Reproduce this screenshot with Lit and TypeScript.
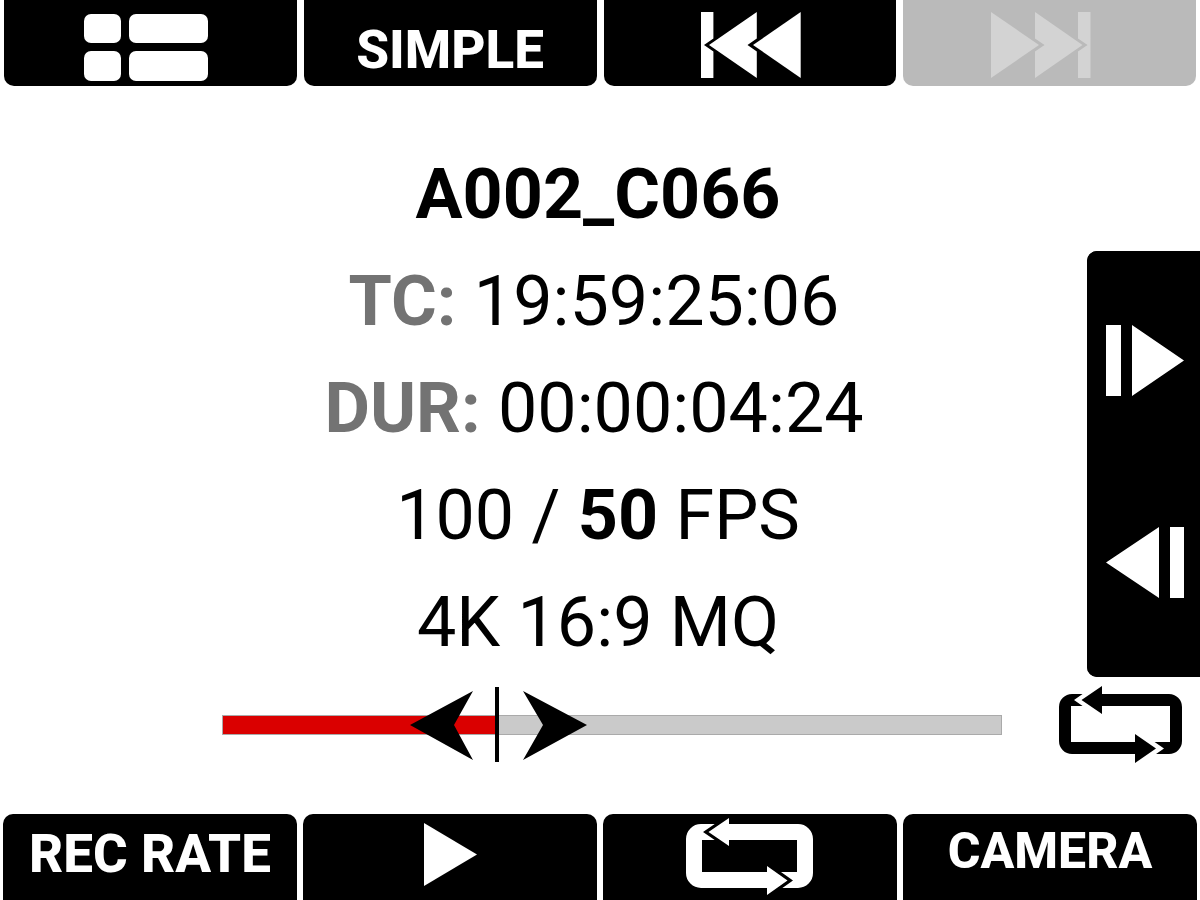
import { LitElement, html, svg, css } from "lit";
import { customElement, state } from "lit/decorators.js";

const listIcon = svg`
  <svg class="icon" viewBox="4 0 292 86" aria-hidden="true">
    <rect x="84" y="14" width="37" height="29" rx="7" />
    <rect x="129" y="14" width="79" height="29" rx="7" />
    <rect x="84" y="51" width="37" height="30" rx="7" />
    <rect x="129" y="51" width="79" height="30" rx="7" />
  </svg>`;

const previousIcon = svg`
  <svg class="icon" viewBox="604 0 292 86" aria-hidden="true">
    <path d="M701 12H713.4V38.5L704 45L713.4 51.5V78H701Z" />
    <path d="M709 45L756.8 12V38.5L747.5 45L756.8 51.5V78Z" />
    <path d="M753 45L800.7 12V78Z" />
  </svg>`;

const nextIcon = svg`
  <svg class="icon" viewBox="904 0 292 86" aria-hidden="true">
    <path d="M991 12L1039 45L991 78Z" />
    <path d="M1035 12L1082.5 45L1035 78V51.5L1044.5 45L1035 38.5Z" />
    <path d="M1090.5 12H1078V38.5L1087.5 45L1078 51.5V78H1090.5Z" />
  </svg>`;

const playIcon = svg`
  <svg class="icon" viewBox="303 814 294 86" aria-hidden="true">
    <path d="M424 823L477 854.5L424 886Z" />
  </svg>`;

const loopIcon = svg`
  <svg class="icon" viewBox="603 814 294 86" aria-hidden="true">
    <path fill-rule="evenodd" d="M701 824H798A15 15 0 0 1 813 839V873A15 15 0 0 1 798 888H701A15 15 0 0 1 686 873V839A15 15 0 0 1 701 824ZM702 840V872H797V840Z" />
    <path class="cut" d="M703 832L723.5 818V846ZM793 880.5L772.500 866V895Z" />
    <path d="M708.500 832L729 818V846ZM787.500 880.5L767 866V895Z" />
  </svg>`;

const loopStatusIcon = svg`
  <svg class="loop-art" viewBox="1058 686 124 77" aria-hidden="true">
    <path fill-rule="evenodd" d="M1072 694H1169A13 13 0 0 1 1182 707V741A13 13 0 0 1 1169 754H1072A13 13 0 0 1 1059 741V707A13 13 0 0 1 1072 694ZM1071 706V742H1170V706Z" />
    <path class="gap" d="M1074 700L1094 686V714ZM1164 748.500L1143 734V763Z" />
    <path d="M1081.500 700L1102 686V714ZM1156 748.500L1135 734V763Z" />
  </svg>`;

const frameForwardIcon = svg`
  <svg class="step-art" viewBox="0 0 78 72" aria-hidden="true">
    <path d="M0 0H15V71H0ZM26 0L78 35.500L26 71Z" />
  </svg>`;

const frameBackIcon = svg`
  <svg class="step-art" viewBox="0 0 78 72" aria-hidden="true">
    <path d="M64 0H78V71H64ZM53 0V71L0 35.500Z" />
  </svg>`;

@customElement("app-root")
export class AppRoot extends LitElement {
  static styles = css`
    :host {
      display: flex;
      flex-direction: column;
      min-height: 100vh;
      background: #fff;
      color: #000;
      font-family: Roboto, "Liberation Sans", sans-serif;
    }
    button {
      border: 0;
      margin: 0;
      padding: 0;
      font: inherit;
      color: #fff;
      background: #000;
      cursor: pointer;
    }
    .bar {
      display: grid;
      grid-template-columns: repeat(4, minmax(0, 1fr));
    }
    .top {
      gap: 7px;
      padding: 0 4px;
    }
    .bottom {
      gap: 6px;
      padding: 0 3px;
    }
    .key {
      display: flex;
      align-items: center;
      justify-content: center;
      height: 86px;
      overflow: hidden;
      font-size: 53px;
      line-height: 60px;
      font-weight: 800;
      white-space: nowrap;
    }
    .top .key {
      border-radius: 0 0 10px 10px;
    }
    .bottom .key {
      border-radius: 10px 10px 0 0;
    }
    .top .label {
      padding-top: 14px;
    }
    .bottom .label {
      padding-bottom: 6px;
    }
    .bottom .small {
      font-size: 50px;
      padding-bottom: 12px;
    }
    .key:disabled {
      background: #bababa;
      color: #d3d3d3;
      cursor: default;
    }
    .icon {
      display: block;
      flex: none;
      height: 86px;
      fill: currentColor;
    }
    .cut {
      fill: #000;
    }
    main {
      flex: 1;
      display: flex;
      flex-direction: column;
      justify-content: flex-end;
      padding-bottom: 51px;
    }
    .clip {
      display: grid;
      grid-template-columns: 113px minmax(0, 1fr) 113px;
      align-items: end;
    }
    .info {
      grid-column: 2;
      padding: 0 4px 1px 0;
      text-align: center;
      font-size: 70px;
      line-height: 107px;
    }
    .info h1,
    .info p {
      margin: 0;
      font-size: inherit;
    }
    .info .timed {
      padding-right: 8px;
    }
    .name {
      font-weight: 700;
    }
    .tag {
      font-weight: 700;
      color: #737373;
    }
    .steps {
      display: grid;
      grid-template-rows: 1fr 1fr;
      height: 426px;
      background: #000;
      border-radius: 10px 0 0 10px;
      overflow: hidden;
    }
    .step {
      display: flex;
      justify-content: center;
      padding-left: 3px;
    }
    .forward {
      align-items: flex-start;
      padding-top: 74px;
    }
    .back {
      align-items: flex-end;
      padding-bottom: 78px;
    }
    .step-art {
      display: block;
      width: 78px;
      height: 72px;
      fill: currentColor;
    }
    .transport {
      display: flex;
      align-items: center;
      gap: 56px;
      padding: 9px 18px 0 222px;
    }
    .scrub {
      position: relative;
      flex: 1;
      display: flex;
      align-items: center;
      height: 77px;
    }
    .track {
      flex: 1;
      box-sizing: border-box;
      height: 20px;
      border: 1px solid #aaa;
      background: #cacaca;
    }
    .played {
      height: 100%;
      background: #da0000;
    }
    .handle {
      position: absolute;
      top: 0;
      width: 180px;
      height: 77px;
      transform: translateX(-50%);
      pointer-events: none;
    }
    .scrub input {
      position: absolute;
      inset: 0;
      width: 100%;
      height: 100%;
      margin: 0;
      opacity: 0;
      cursor: pointer;
    }
    .loop {
      background: none;
      color: #000;
    }
    .loop-art {
      display: block;
      width: 124px;
      height: 77px;
      fill: currentColor;
    }
    .gap {
      fill: #fff;
    }
  `;

  @state() private position = 353;

  private onScrub(e: Event) {
    this.position = Number((e.target as HTMLInputElement).value);
  }

  render() {
    const percent = `${this.position / 10}%`;
    return html`
      <nav class="bar top" aria-label="Clip navigation">
        <button class="key" aria-label="Clip list">${listIcon}</button>
        <button class="key"><span class="label">SIMPLE</span></button>
        <button class="key" aria-label="Previous clip">${previousIcon}</button>
        <button class="key" aria-label="Next clip" disabled>${nextIcon}</button>
      </nav>
      <main>
        <section class="clip">
          <div class="info">
            <h1 class="name">A002_C066</h1>
            <p class="timed"><span class="tag">TC:</span> 19:59:25:06</p>
            <p class="timed"><span class="tag">DUR:</span> 00:00:04:24</p>
            <p>100 / <strong>50</strong> FPS</p>
            <p>4K 16:9 MQ</p>
          </div>
          <div class="steps">
            <button class="step forward" aria-label="Step forward">${frameForwardIcon}</button>
            <button class="step back" aria-label="Step back">${frameBackIcon}</button>
          </div>
        </section>
        <section class="transport">
          <div class="scrub">
            <div class="track"><div class="played" style="width:${percent}"></div></div>
            <svg class="handle" style="left:${percent}" viewBox="0 0 180 77" aria-hidden="true">
              <path d="M88 1H92V76H88ZM3 39L66 5L47 39L66 74ZM180 39L116 5L136 39L116 74Z" />
            </svg>
            <input type="range" min="0" max="1000" aria-label="Playback position"
              .value=${String(this.position)} @input=${this.onScrub} />
          </div>
          <button class="loop" aria-label="Loop mode">${loopStatusIcon}</button>
        </section>
      </main>
      <nav class="bar bottom" aria-label="Playback controls">
        <button class="key"><span class="label">REC RATE</span></button>
        <button class="key" aria-label="Play">${playIcon}</button>
        <button class="key" aria-label="Loop">${loopIcon}</button>
        <button class="key"><span class="label small">CAMERA</span></button>
      </nav>
    `;
  }
}
